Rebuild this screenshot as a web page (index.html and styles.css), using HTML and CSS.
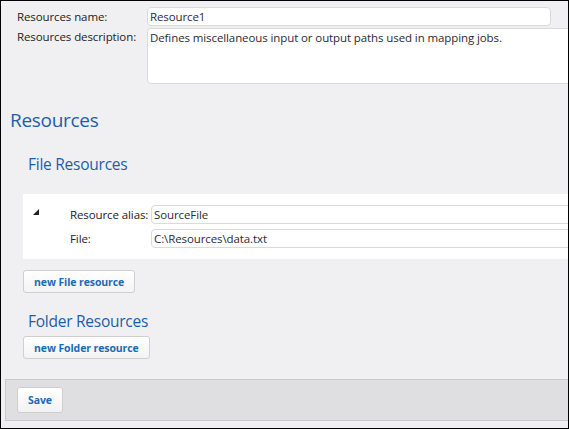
FILE: index.html
```html
<!DOCTYPE html>
<html>
<head>
<meta charset="utf-8">
<link rel="stylesheet" href="styles.css">
</head>
<body>
<div class="window">
  <div class="props">
    <div class="lbl">Resources name:</div>
    <div class="inp name">Resource1</div>
    <div class="lbl lbl-desc">Resources description:</div>
    <div class="inp desc">Defines miscellaneous input or output paths used in mapping jobs.</div>
  </div>

  <h1 class="title">Resources</h1>

  <div class="group">
    <h2 class="subtitle">File Resources</h2>
    <div class="item">
      <div class="toggle">
        <svg class="tri" width="6" height="6" viewBox="0 0 6 6"><polygon points="0,6 6,6 6,0" fill="#222"/></svg>
      </div>
      <div class="fields">
        <div class="flbl">Resource alias:</div>
        <div class="inp wide">SourceFile</div>
        <div class="flbl">File:</div>
        <div class="inp wide">C:\Resources\data.txt</div>
      </div>
    </div>
    <button class="btn btn-file">new File resource</button>

    <h2 class="subtitle folder">Folder Resources</h2>
    <button class="btn btn-folder">new Folder resource</button>
  </div>

  <div class="footer">
    <button class="btn btn-save">Save</button>
  </div>
</div>
</body>
</html>
```

FILE: styles.css
```css
html, body {
  margin: 0;
  padding: 0;
  background: #f0f0f2;
}

.window {
  box-sizing: border-box;
  width: 569px;
  height: 429px;
  border: 1px solid #000;
  background: #f0f0f2;
  overflow: hidden;
  display: flex;
  flex-direction: column;
  font-family: "Open Sans", "Noto Sans", sans-serif;
  font-size: 11.5px;
  letter-spacing: -0.1px;
  color: #222;
}

.props {
  display: grid;
  grid-template-columns: 130px auto;
  row-gap: 2px;
  padding: 6px 0 0 16px;
}

.lbl {
  line-height: 19px;
  white-space: nowrap;
}

.lbl-desc {
  margin-top: -1px;
}

.inp {
  box-sizing: border-box;
  height: 19px;
  border: 1px solid #dadada;
  border-radius: 4px;
  background: #fff;
  padding: 0 2px;
  line-height: 17px;
  color: #2e2a33;
  white-space: nowrap;
  overflow: hidden;
}

.name {
  width: 404px;
}

.desc {
  width: 460px;
  height: 56px;
  line-height: 16px;
  padding: 1px 2px;
}

.title {
  margin: 23px 0 0 9px;
  font-size: 19px;
  letter-spacing: -0.3px;
  font-weight: normal;
  line-height: 26px;
  color: #1d5ea9;
}

.group {
  display: flex;
  flex-direction: column;
  align-items: flex-start;
  padding-left: 22px;
}

.subtitle {
  margin: 20px 0 0 5px;
  font-size: 15.5px;
  letter-spacing: -0.25px;
  font-weight: normal;
  line-height: 22px;
  color: #1d5ea9;
}

.subtitle.folder {
  margin-top: 17px;
}

.item {
  align-self: stretch;
  margin-top: 19px;
  background: #fff;
  display: flex;
  padding: 11px 0 11px 0;
}

.toggle {
  width: 47px;
  flex: none;
}

.tri {
  display: block;
  margin: 4px 0 0 10px;
}

.fields {
  display: grid;
  grid-template-columns: 81px 460px;
  row-gap: 5px;
}

.flbl {
  line-height: 19px;
  white-space: nowrap;
}

.wide {
  width: 460px;
}

.btn {
  box-sizing: border-box;
  font-family: "Open Sans", "Noto Sans", sans-serif;
  font-weight: bold;
  font-size: 10.5px;
  letter-spacing: -0.1px;
  color: #1b6ab5;
  background: linear-gradient(#ffffff, #f3f3f4);
  border: 1px solid #cfcfd1;
  border-radius: 3px;
  height: 23px;
  padding: 0 10px;
  margin: 0;
}

.btn-file {
  margin-top: 11px;
}

.btn-folder {
  margin-top: 4px;
}

.footer {
  box-sizing: border-box;
  margin: auto 0 7px 4px;
  height: 42px;
  border: 1px solid #c9c9cb;
  border-right: none;
  background: #dfdfe1;
  padding: 7px 11px;
}

.btn-save {
  height: 26px;
  padding: 0 10px;
}
```
